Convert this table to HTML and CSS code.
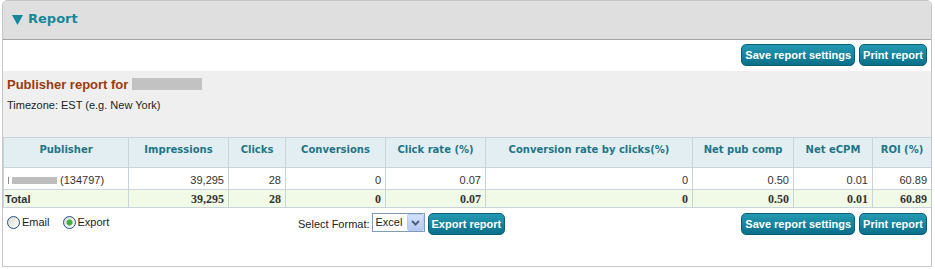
FILE: index.html
```html
<!DOCTYPE html>
<html lang="en">
<head>
    <meta charset="UTF-8">
    <title>Report</title>
    <link rel="stylesheet" href="styles.css">
</head>
<body>
    <div class="report">
        <div class="report-head">
            <svg class="caret" width="11" height="10" viewBox="0 0 11 10"><polygon points="0,0 11,0 5.5,10" fill="#16889a"/></svg>
            <span>Report</span>
        </div>

        <div class="toolbar">
            <button class="btn">Save report settings</button>
            <button class="btn">Print report</button>
        </div>

        <div class="report-info">
            <h2 class="report-title">Publisher report for <span class="masked masked-title"></span></h2>
            <p class="timezone">Timezone: EST (e.g. New York)</p>
        </div>

        <table class="stats">
            <colgroup>
                <col style="width:125px">
                <col style="width:100px">
                <col style="width:57px">
                <col style="width:100px">
                <col style="width:100px">
                <col style="width:207px">
                <col style="width:101px">
                <col style="width:79px">
                <col style="width:59px">
            </colgroup>
            <thead>
                <tr>
                    <th>Publisher</th>
                    <th>Impressions</th>
                    <th>Clicks</th>
                    <th>Conversions</th>
                    <th>Click rate (%)</th>
                    <th>Conversion rate by clicks(%)</th>
                    <th>Net pub comp</th>
                    <th>Net eCPM</th>
                    <th>ROI (%)</th>
                </tr>
            </thead>
            <tbody>
                <tr class="row">
                    <td class="name"><span class="masked masked-name"></span> (134797)</td>
                    <td>39,295</td>
                    <td>28</td>
                    <td>0</td>
                    <td>0.07</td>
                    <td>0</td>
                    <td>0.50</td>
                    <td>0.01</td>
                    <td>60.89</td>
                </tr>
                <tr class="total">
                    <td class="name">Total</td>
                    <td>39,295</td>
                    <td>28</td>
                    <td>0</td>
                    <td>0.07</td>
                    <td>0</td>
                    <td>0.50</td>
                    <td>0.01</td>
                    <td>60.89</td>
                </tr>
            </tbody>
        </table>

        <div class="export-bar">
            <div class="delivery">
                <label class="radio-label"><span class="radio"></span>Email</label>
                <label class="radio-label"><span class="radio checked"></span>Export</label>
            </div>
            <div class="format">
                <span class="format-label">Select Format:</span>
                <span class="select">
                    <span class="select-value">Excel</span>
                    <span class="select-arrow">
                        <svg width="15" height="15" viewBox="0 0 15 15"><polyline points="4,6 7.5,9.5 11,6" fill="none" stroke="#4d6185" stroke-width="2"/></svg>
                    </span>
                </span>
                <button class="btn">Export report</button>
            </div>
            <div class="actions">
                <button class="btn">Save report settings</button>
                <button class="btn">Print report</button>
            </div>
        </div>
    </div>
</body>
</html>
```

FILE: styles.css
```css
* {
    margin: 0;
    padding: 0;
    box-sizing: border-box;
}

body {
    font-family: "Liberation Sans", Arial, sans-serif;
    font-size: 11px;
    color: #222;
    background: #fff;
}

.report {
    width: 930px;
    height: 267px;
    margin-left: 2px;
    border: 1px solid #c6c6c6;
    border-radius: 5px 5px 0 0;
    overflow: hidden;
    background: #fff;
}

.report-head {
    display: flex;
    align-items: flex-start;
    gap: 5px;
    height: 39px;
    padding: 10px 0 0 9px;
    background: #dfdfdf;
    border-bottom: 1px solid #a3a3a3;
    color: #16889a;
    font: bold 13px/16px "DejaVu Sans", Verdana, sans-serif;
}

.caret {
    margin-top: 4px;
}

.toolbar {
    display: flex;
    justify-content: flex-end;
    gap: 4px;
    padding: 4px 4px 5px;
}

.btn {
    height: 22px;
    padding: 0 3px;
    border: 1px solid #0a5f74;
    border-radius: 5px;
    background: linear-gradient(#2499b3, #0a6f89);
    color: #fff;
    font: bold 11px "Liberation Sans", Arial, sans-serif;
    cursor: pointer;
}

.report-info {
    background: #efefef;
    padding: 6px 4px 25px;
}

.report-title {
    font: bold 13px/16px "Liberation Sans", Arial, sans-serif;
    color: #9c3b0b;
}

.timezone {
    margin-top: 5px;
    line-height: 14px;
}

.masked {
    display: inline-block;
    background: #c2c2c2;
    filter: blur(0.5px);
}

.masked-title {
    width: 70px;
    height: 12px;
    vertical-align: -1px;
}

.masked-name {
    width: 49px;
    height: 7px;
    background: linear-gradient(to right, #8a8a8a 0 1px, transparent 1px 4px, #bdbdbd 4px);
    vertical-align: 0;
}

/* stats table */
.stats {
    width: 928px;
    border-collapse: collapse;
    table-layout: fixed;
}

.stats th,
.stats td {
    border: 1px solid #c7d4d9;
}

.stats th {
    height: 30px;
    padding: 6px 2px 0;
    background: #e3eef2;
    color: #1f7587;
    font: bold 10px/12px "DejaVu Sans", Verdana, sans-serif;
    text-align: center;
    vertical-align: top;
}

.stats td {
    padding: 0 4px;
    line-height: 14px;
    text-align: right;
    vertical-align: top;
    color: #333;
}

.stats .row td {
    height: 22px;
    padding-top: 5px;
}

.stats td.name {
    text-align: left;
}

.stats .total td {
    height: 18px;
    padding-top: 2px;
    background: #f0fae7;
    font: bold 12px/14px "Liberation Serif", "Times New Roman", serif;
}

.stats .total td.name {
    padding-left: 1px;
    font: bold 11px/15px "Liberation Sans", Arial, sans-serif;
}

/* export row */
.export-bar {
    display: flex;
    align-items: flex-start;
    padding: 5px 4px 0 4px;
}

.delivery {
    flex: 0 0 291px;
    display: flex;
    gap: 13px;
    margin-top: 2px;
}

.radio-label {
    display: inline-flex;
    align-items: center;
    gap: 2px;
    line-height: 14px;
}

.radio {
    width: 13px;
    height: 13px;
    border: 1px solid #1f4f7e;
    border-radius: 50%;
    background: linear-gradient(135deg, #d8d8d2, #fff);
}

.radio.checked {
    background: radial-gradient(circle, #3fae45 0 2.5px, #8fcf8f 3px, transparent 3.5px), linear-gradient(135deg, #d8d8d2, #fff);
}

.format {
    display: flex;
    align-items: flex-start;
}

.format-label {
    margin-top: 4px;
    line-height: 14px;
}

.select {
    display: flex;
    width: 53px;
    height: 19px;
    margin-left: 2px;
    border: 1px solid #7f9db9;
    background: #fff;
}

.select-value {
    padding-left: 3px;
    line-height: 17px;
    color: #222;
}

.select-arrow {
    display: flex;
    align-items: center;
    justify-content: center;
    width: 17px;
    height: 17px;
    margin-left: auto;
    border: 1px solid #b7cbf2;
    border-radius: 2px;
    background: linear-gradient(#d3e1fb, #b4c9f1);
}

.format .btn {
    margin-left: 3px;
}

.actions {
    display: flex;
    gap: 4px;
    margin-left: auto;
}
```
